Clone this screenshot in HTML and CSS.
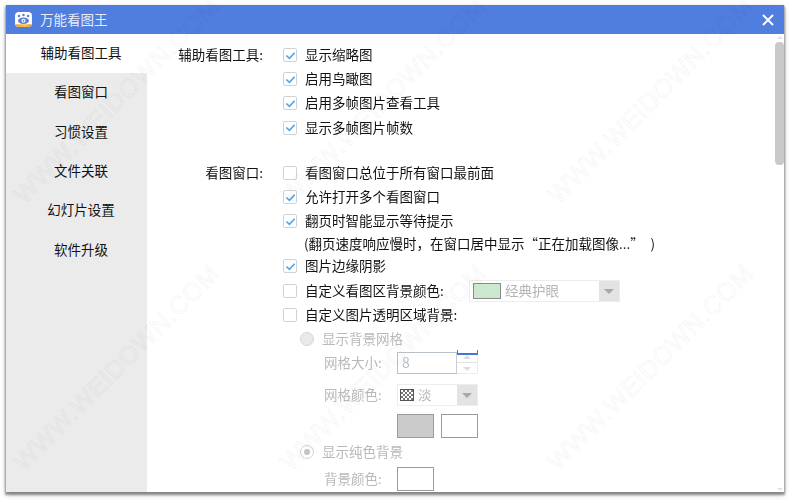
FILE: index.html
```html
<!DOCTYPE html>
<html lang="zh-CN">
<head>
<meta charset="utf-8">
<title>万能看图王</title>
<link rel="stylesheet" href="styles.css">
</head>
<body>
<div class="window">
  <header class="titlebar">
    <svg class="logo" viewBox="0 0 18 16" width="17" height="15">
      <defs><linearGradient id="lg" x1="0" x2="1" y1="0" y2="0"><stop offset="0" stop-color="#f0a030"/><stop offset=".6" stop-color="#f8c840"/><stop offset="1" stop-color="#f08a3c"/></linearGradient></defs>
      <rect x="0" y="0" width="18" height="16" rx="4" fill="#fff"/>
      <path d="M0.5 13H17.5V12.5Q17.5 16 14 16H4Q0.5 16 0.5 12.5Z" fill="url(#lg)"/>
      <ellipse cx="9" cy="9.3" rx="5.8" ry="3.5" fill="#5a7fd0"/>
      <circle cx="9" cy="9.3" r="2.2" fill="#fff"/>
      <circle cx="9" cy="9.3" r="1" fill="#5a7fd0"/>
      <circle cx="4.2" cy="4.2" r="1.3" fill="#5a7fd0"/>
      <circle cx="9" cy="3.2" r="1.3" fill="#5a7fd0"/>
      <circle cx="13.8" cy="4.2" r="1.3" fill="#5a7fd0"/>
    </svg>
    <span class="title">万能看图王</span>
    <svg class="close" viewBox="0 0 12 12" width="12" height="12"><path d="M1 1L11 11M11 1L1 11" stroke="#fff" stroke-width="1.8"/></svg>
  </header>
  <div class="body">
    <nav class="sidebar">
      <div class="tab active">辅助看图工具</div>
      <div class="tab">看图窗口</div>
      <div class="tab">习惯设置</div>
      <div class="tab">文件关联</div>
      <div class="tab">幻灯片设置</div>
      <div class="tab">软件升级</div>
    </nav>
    <main class="content">
      <section class="group">
        <div class="group-label">辅助看图工具:</div>
        <div class="options">
          <div class="row"><span class="cb on"><svg viewBox="0 0 12 12"><path d="M1.5 6L4.8 9L10.5 3" /></svg></span>显示缩略图</div>
          <div class="row"><span class="cb on"><svg viewBox="0 0 12 12"><path d="M1.5 6L4.8 9L10.5 3" /></svg></span>启用鸟瞰图</div>
          <div class="row"><span class="cb on"><svg viewBox="0 0 12 12"><path d="M1.5 6L4.8 9L10.5 3" /></svg></span>启用多帧图片查看工具</div>
          <div class="row"><span class="cb on"><svg viewBox="0 0 12 12"><path d="M1.5 6L4.8 9L10.5 3" /></svg></span>显示多帧图片帧数</div>
        </div>
      </section>
      <section class="group second">
        <div class="group-label">看图窗口:</div>
        <div class="options">
          <div class="row"><span class="cb"></span>看图窗口总位于所有窗口最前面</div>
          <div class="row"><span class="cb on"><svg viewBox="0 0 12 12"><path d="M1.5 6L4.8 9L10.5 3" /></svg></span>允许打开多个看图窗口</div>
          <div class="row"><span class="cb on"><svg viewBox="0 0 12 12"><path d="M1.5 6L4.8 9L10.5 3" /></svg></span>翻页时智能显示等待提示</div>
          <div class="row note">(翻页速度响应慢时，在窗口居中显示“正在加载图像...”&ensp;)</div>
          <div class="row"><span class="cb on"><svg viewBox="0 0 12 12"><path d="M1.5 6L4.8 9L10.5 3" /></svg></span>图片边缘阴影</div>
          <div class="row"><span class="cb"></span><span class="custom-label">自定义看图区背景颜色:</span>
            <span class="select wide"><span class="swatch green"></span><span class="value">经典护眼</span><span class="arrow"></span></span>
          </div>
          <div class="row"><span class="cb"></span>自定义图片透明区域背景:</div>
          <div class="row sub disabled"><span class="radio"></span>显示背景网格</div>
          <div class="row field disabled"><span class="field-label">网格大小:</span>
            <span class="spin"><span class="spin-value">8</span><span class="spin-btns"><span class="spin-up"></span><span class="spin-down"></span></span></span>
          </div>
          <div class="row field tall disabled"><span class="field-label">网格颜色:</span>
            <span class="select narrow"><span class="checker"></span><span class="value">淡</span><span class="arrow"></span></span>
          </div>
          <div class="row field swatches"><span class="color gray"></span><span class="color"></span></div>
          <div class="row sub solid disabled"><span class="radio checked"></span>显示纯色背景</div>
          <div class="row field disabled last"><span class="field-label">背景颜色:</span><span class="color"></span></div>
        </div>
      </section>
      <div class="scrollbar"><span class="thumb"></span></div>
    </main>
  </div>
  <svg class="watermark" viewBox="0 0 778 487" width="778" height="487" aria-hidden="true">
    <text transform="translate(18 200) rotate(-45)">WWW.WEIDOWN.COM</text>
    <text transform="translate(285 200) rotate(-45)">WWW.WEIDOWN.COM</text>
    <text transform="translate(552 200) rotate(-45)">WWW.WEIDOWN.COM</text>
    <text transform="translate(18 467) rotate(-45)">WWW.WEIDOWN.COM</text>
    <text transform="translate(285 467) rotate(-45)">WWW.WEIDOWN.COM</text>
    <text transform="translate(552 467) rotate(-45)">WWW.WEIDOWN.COM</text>
  </svg>
</div>
</body>
</html>
```
FILE: styles.css
```css
* { box-sizing: border-box; }
html, body { margin: 0; height: 100%; overflow: hidden; background: #fff; }
body {
  padding: 5px 6px 8px 6px;
  font-family: "Noto Sans CJK SC", "Liberation Sans", sans-serif;
  font-size: 13.5px;
  color: #111;
}
.window {
  position: relative;
  width: 778px;
  height: 487px;
  display: flex;
  flex-direction: column;
  background: #fff;
  box-shadow: 0 2px 2px 1px rgba(0,0,0,.38), 0 3px 6px rgba(0,0,0,.2);
  filter: blur(.35px);
}
.titlebar {
  height: 29px;
  flex: none;
  background: #507edf;
  display: flex;
  align-items: center;
  padding: 0 10px 0 9px;
  color: #fff;
}
.logo { flex: none; }
.title { margin-left: 8px; margin-bottom: 2px; font-size: 13.5px; color: #e6ecfa; }
.close { margin-left: auto; }
.body { flex: 1; display: flex; min-height: 0; overflow: hidden; }
.sidebar { width: 141px; flex: none; background: #ebebeb; }
.tab {
  height: 39.3px;
  display: flex;
  align-items: center;
  justify-content: center;
  padding: 0 0 3px 9px;
}
.tab.active { background: #fff; }
.content { flex: 1; position: relative; padding-top: 9px; overflow: hidden; }
.group { display: flex; }
.group.second { margin-top: 21px; }
.group-label { width: 116px; flex: none; text-align: right; height: 24px; line-height: 22px; }
.options { margin-left: 20px; flex: 1; }
.row { height: 24.2px; display: flex; align-items: center; white-space: nowrap; padding-bottom: 2px; }
.cb {
  width: 14px; height: 14px; flex: none;
  margin: 2px 8px 0 0;
  border: 1px solid #d2d2d2;
  border-radius: 2px;
  background: #fff;
  display: flex; align-items: center; justify-content: center;
}
.cb svg { width: 11px; height: 11px; fill: none; stroke: #4aa6ee; stroke-width: 1.8; }
.note { padding-left: 21px; height: 21px; }
.custom-label { width: 164px; flex: none; }
.select {
  display: flex; align-items: center; height: 22px;
  border: 1px solid #ededed; background: #fff;
  color: #b4b4b4;
  margin-top: 2px;
}
.select.wide { width: 151px; padding-left: 3px; }
.select.narrow { width: 81px; padding-left: 2px; margin-top: 1px; }
.swatch { width: 28px; height: 16px; border: 1px solid #8a8a8a; }
.swatch.green { background: #cce8cf; }
.value { margin-left: 4px; margin-bottom: 2px; }
.arrow {
  margin-left: auto; width: 20px; height: 100%;
  background: #e3e3e3; position: relative; flex: none;
}
.arrow::after {
  content: ""; position: absolute; left: 5px; top: 8px;
  border: 5px solid transparent; border-top: 5px solid #a8a8a8; border-bottom: 0;
}
.disabled { color: #b9b9b9; }
.sub { padding-left: 17px; }
.radio {
  width: 14px; height: 14px; border-radius: 50%; flex: none;
  border: 1px solid #d4d4d4; background: #e9e9e9; margin: 2px 8px 0 0;
}
.radio.checked { background: #fff; position: relative; }
.radio.checked::after {
  content: ""; position: absolute; left: 3px; top: 3px; width: 6px; height: 6px;
  border-radius: 50%; background: #c4c4c4;
}
.field { padding-left: 41px; }
.field-label { width: 73px; flex: none; }
.spin { display: flex; width: 81px; height: 22px; margin-top: 2px; }
.spin-value {
  width: 60px; border: 1px solid #b9c0c6; border-right-color: #c8cdd2; color: #b9bec6;
  padding-left: 4px; line-height: 19px; font-size: 14px;
}
.spin-btns { flex: 1; display: flex; flex-direction: column; position: relative; border-right: 1px solid #ececec; border-bottom: 1px solid #ececec; }
.spin-btns::before {
  content: ""; position: absolute; left: 0; right: -1px; top: -2px;
  border: 1px solid #3f78d8; border-top: 0; border-bottom-width: 2px; height: 3px;
}
.spin-up, .spin-down { flex: 1; position: relative; }
.spin-up { border-bottom: 1px solid #e2e2e2; }
.spin-up::after, .spin-down::after {
  content: ""; position: absolute; left: 6px; top: 3px;
  border: 4px solid transparent;
}
.spin-up::after { border-bottom: 4px solid #dcdcdc; border-top: 0; }
.spin-down::after { border-top: 4px solid #dcdcdc; border-bottom: 0; top: 4px; }
.checker {
  width: 14px; height: 12px; border: 1px solid #555;
  background: repeating-conic-gradient(#777 0 25%, #fff 0 50%) 0 0 / 4px 4px;
  flex: none;
}
.select.narrow .value { margin-left: 4px; }
.tall { height: 32px; margin-top: 4px; }
.color { width: 37px; height: 24px; border: 1px solid #9a9a9a; background: #fff; flex: none; }
.color.gray { background: #cbcbcb; }
.swatches { height: 26px; gap: 7px; padding-left: 114px; margin-top: 2px; padding-bottom: 0; }
.solid { height: 26px; }
.last { height: 28px; padding-bottom: 0; }
.last .field-label { margin-bottom: 2px; }
.scrollbar { position: absolute; right: 0; top: 0; bottom: 0; width: 9px; }
.scrollbar::before, .scrollbar::after {
  content: ""; position: absolute; left: 2px; border: 3px solid transparent;
}
.scrollbar::before { top: 2px; border-bottom: 3px solid #e4e4e4; border-top: 0; }
.scrollbar::after { bottom: 1px; border-top: 3px solid #e4e4e4; border-bottom: 0; }
.thumb { position: absolute; left: 0; top: 8px; width: 9px; height: 123px; border-radius: 4px; background: #c9c9c9; }
.watermark {
  position: absolute; left: 0; top: 0; pointer-events: none; overflow: visible;
}
.watermark text {
  font-family: "Liberation Sans", sans-serif;
  font-size: 25px;
  letter-spacing: .7px;
  fill: none;
  stroke: #000;
  stroke-width: .7;
  opacity: .05;
}
```
